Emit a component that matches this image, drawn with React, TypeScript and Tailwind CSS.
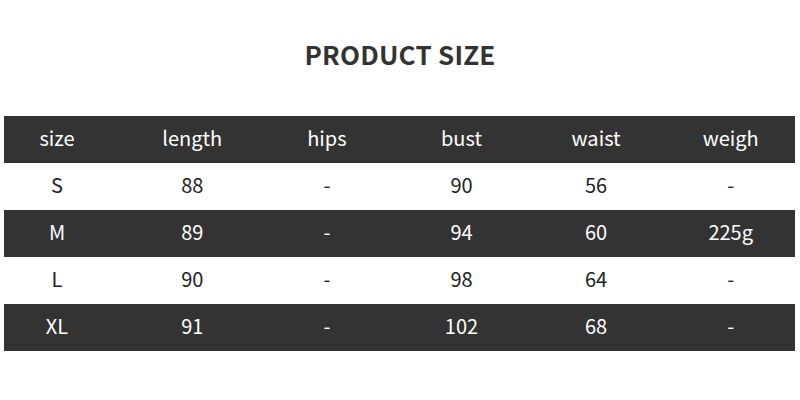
const headers = ['size', 'length', 'hips', 'bust', 'waist', 'weigh']

const rows = [
    ['S', '88', '-', '90', '56', '-'],
    ['M', '89', '-', '94', '60', '225g'],
    ['L', '90', '-', '98', '64', '-'],
    ['XL', '91', '-', '102', '68', '-'],
]

function Row({ cells, dark }: { cells: string[]; dark: boolean }) {
    return (
        <div
            className={`grid grid-cols-[121px_repeat(5,134.6px)] h-[47px] pb-[4px] items-center text-[20px] ${
                dark ? 'bg-[#333333] text-white' : 'bg-white text-[#222222]'
            }`}
        >
            {cells.map((c, i) => (
                <div key={i} className={`text-center ${i === 0 ? 'pr-[15px]' : ''}`}>
                    {c}
                </div>
            ))}
        </div>
    )
}

export default function App() {
    return (
        <div
            className="w-[800px] h-[400px] bg-white overflow-hidden"
            style={{ fontFamily: '"Noto Sans CJK SC", "Noto Sans", sans-serif' }}
        >
            <h1 className="pt-[35px] h-[116px] text-center text-[26px] leading-[38px] font-bold text-[#333333] tracking-[0.2px]">
                PRODUCT SIZE
            </h1>
            <div className="ml-[4px] w-[791px] overflow-hidden">
                <Row cells={headers} dark />
                {rows.map((r, i) => (
                    <Row key={r[0]} cells={r} dark={i % 2 === 1} />
                ))}
            </div>
        </div>
    )
}
